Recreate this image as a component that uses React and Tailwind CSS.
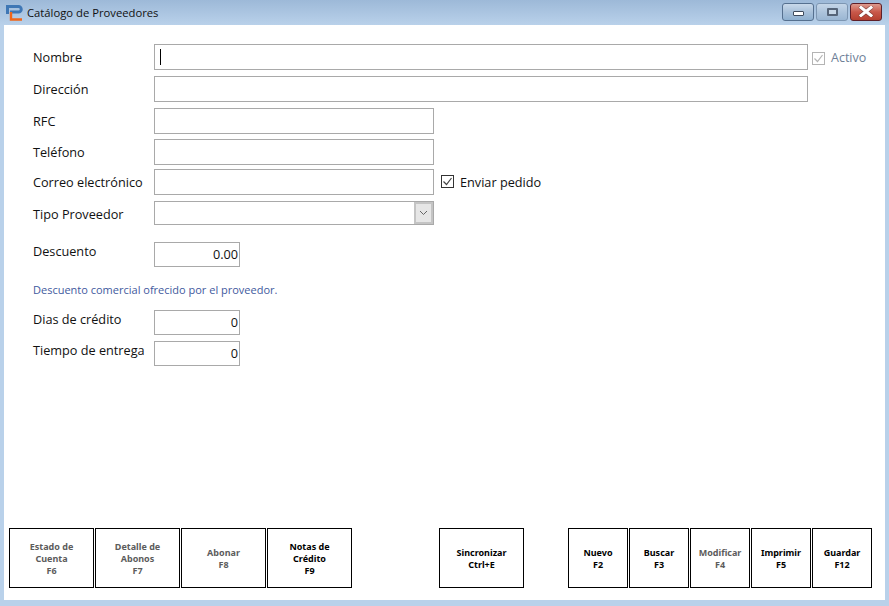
import React from 'react'

const labelFont = "font-['Open_Sans',sans-serif] text-[12.7px] text-[#111]"

const Field = ({ label, children, labelClass = '', className = '' }) => (
  <div className={`flex items-center ${className}`}>
    <span className={`w-[121px] shrink-0 whitespace-nowrap ${labelFont} ${labelClass}`}>{label}</span>
    {children}
  </div>
)

const Box = ({ className = '', children }) => (
  <div className={`h-full border border-[#a9a9a9] bg-white ${className}`}>{children}</div>
)

const NumBox = ({ value }) => (
  <div className={`flex h-full w-[86px] items-center justify-end border border-[#a9a9a9] bg-white pr-[1px] pt-[1px] ${labelFont}`}>
    {value}
  </div>
)

const Fn = ({ lines, w = 'w-[85px]', muted }) => (
  <button className={`flex h-[60px] ${w} flex-col items-center justify-center border border-black bg-white pt-[1px] font-['Noto_Sans',sans-serif] text-[9px] leading-[12px] font-bold ${muted ? 'text-[#5c5c5c]' : 'text-black'}`}>
    {lines.map((l) => (
      <span key={l}>{l}</span>
    ))}
  </button>
)

const Logo = () => (
  <svg width="17" height="16" viewBox="0 0 17 16" fill="none">
    <path d="M0 1.5h12.5a2.7 2.7 0 0 1 0 5.5H4M1.5 1v8" stroke="#3f77b5" strokeWidth="3" />
    <path d="M5 7v7.5h11" stroke="#f0661a" strokeWidth="2.4" />
  </svg>
)

const WinBtn = ({ className = '', children }) => (
  <div className={`flex h-[18px] w-[32px] items-center justify-center rounded-[3px] border ${className}`}>{children}</div>
)

export default function App() {
  return (
    <div className="flex h-[606px] w-[889px] flex-col overflow-hidden bg-[#b9d1ea]">
      <div className="flex h-[25px] shrink-0 items-center bg-gradient-to-b from-[#9db9d8] to-[#b9d1ea] pl-[6px] pr-[7px]">
        <Logo />
        <span className="ml-[4px] mt-[2px] font-['Open_Sans',sans-serif] text-[11.25px] text-[#111]">Catálogo de Proveedores</span>
        <div className="ml-auto mb-[2px] flex gap-[2px]">
          <WinBtn className="border-[#56708f] bg-gradient-to-b from-[#c9d9ea] via-[#a9c1da] to-[#8fb0d0]">
            <div className="mt-[3px] h-[5px] w-[11px] rounded-[1px] border border-[#3e4a5c] bg-white" />
          </WinBtn>
          <WinBtn className="border-[#7d96b2] bg-gradient-to-b from-[#c5d6e8] via-[#adc4dc] to-[#9ab6d3]">
            <div className="h-[8px] w-[11px] rounded-[1px] border-2 border-[#566579] bg-[#c8d8e8]" />
          </WinBtn>
          <WinBtn className="border-[#5e1f28] bg-gradient-to-b from-[#dc9a8e] via-[#c9584a] to-[#b5402f]">
            <svg width="16" height="11" viewBox="0 0 16 11" fill="none">
              <path d="M3 1.5l10 8M13 1.5l-10 8" stroke="#4a2a2a" strokeWidth="4.4" strokeLinecap="round" opacity="0.55" />
              <path d="M3 1.5l10 8M13 1.5l-10 8" stroke="#fff" strokeWidth="3" strokeLinecap="square" />
            </svg>
          </WinBtn>
        </div>
      </div>

      <div className="mx-[4px] flex h-[575px] flex-col bg-white pl-[29px]">
        <div className="mt-[19px] flex h-[26px] items-center">
          <Field label="Nombre" labelClass="mt-[2px]" className="h-full">
            <Box className="relative w-[654px]">
              <div className="absolute left-[5px] top-[4px] h-[16px] w-[1px] bg-black" />
            </Box>
          </Field>
          <div className="ml-[4px] mt-[2px] flex items-center gap-[6px]">
            <div className="flex h-[13px] w-[13px] items-center justify-center border border-[#b4b4b4] bg-white">
              <svg width="11" height="11" viewBox="0 0 11 11" fill="none">
                <path d="M1.5 5.5l3 3 5-6.5" stroke="#b4b4b4" strokeWidth="1.2" />
              </svg>
            </div>
            <span className="mt-[1px] font-['Open_Sans',sans-serif] text-[12.5px] text-[#6f7f98]">Activo</span>
          </div>
        </div>

        <Field label="Dirección" labelClass="mt-[2px]" className="mt-[6px] h-[26px]">
          <Box className="w-[654px]" />
        </Field>
        <Field label="RFC" labelClass="mt-[2px]" className="mt-[6px] h-[26px]">
          <Box className="w-[280px]" />
        </Field>
        <Field label="Teléfono" labelClass="mt-[2px]" className="mt-[5px] h-[26px]">
          <Box className="w-[280px]" />
        </Field>
        <Field label="Correo electrónico" labelClass="mt-[2px]" className="mt-[4px] h-[26px]">
          <Box className="w-[280px]" />
          <div className="ml-[7px] flex items-center gap-[6px]">
            <div className="flex h-[13px] w-[13px] items-center justify-center border border-[#333] bg-white">
              <svg width="11" height="11" viewBox="0 0 11 11" fill="none">
                <path d="M1.5 5.5l3 3 5-6.5" stroke="#444" strokeWidth="1.2" />
              </svg>
            </div>
            <span className={`${labelFont} mt-[2px]`}>Enviar pedido</span>
          </div>
        </Field>
        <Field label="Tipo Proveedor" labelClass="mt-[3px]" className="mt-[6px] h-[24px]">
          <Box className="flex w-[280px] justify-end">
            <div className="flex w-[19px] items-center justify-center border-2 border-[#c4c4c4] bg-[#e6e6e6]">
              <svg width="9" height="6" viewBox="0 0 9 6" fill="none">
                <path d="M1 1l3.5 3.5L8 1" stroke="#666" strokeWidth="1" />
              </svg>
            </div>
          </Box>
        </Field>
        <Field label="Descuento" labelClass="-mt-[5px]" className="mt-[17px] h-[25px]">
          <NumBox value="0.00" />
        </Field>
        <p className="mt-[16px] h-[14px] font-['Open_Sans',sans-serif] text-[11px] leading-[14px] text-[#3f5a9e]">
          Descuento comercial ofrecido por el proveedor.
        </p>
        <Field label="Dias de crédito" labelClass="-mt-[5px]" className="mt-[13px] h-[25px]">
          <NumBox value="0" />
        </Field>
        <Field label="Tiempo de entrega" labelClass="-mt-[5px]" className="mt-[6px] h-[25px]">
          <NumBox value="0" />
        </Field>

        <div className="mt-[162px] -ml-[24px] flex">
          <div className="flex gap-[1px]">
            <Fn muted lines={['Estado de', 'Cuenta', 'F6']} />
            <Fn muted lines={['Detalle de', 'Abonos', 'F7']} />
            <Fn muted lines={['Abonar', 'F8']} />
            <Fn lines={['Notas de', 'Crédito', 'F9']} />
          </div>
          <div className="ml-[87px]">
            <Fn lines={['Sincronizar', 'Ctrl+E']} />
          </div>
          <div className="ml-[44px] flex gap-[1px]">
            <Fn w="w-[60px]" lines={['Nuevo', 'F2']} />
            <Fn w="w-[60px]" lines={['Buscar', 'F3']} />
            <Fn w="w-[60px]" muted lines={['Modificar', 'F4']} />
            <Fn w="w-[60px]" lines={['Imprimir', 'F5']} />
            <Fn w="w-[60px]" lines={['Guardar', 'F12']} />
          </div>
        </div>
      </div>
    </div>
  )
}
